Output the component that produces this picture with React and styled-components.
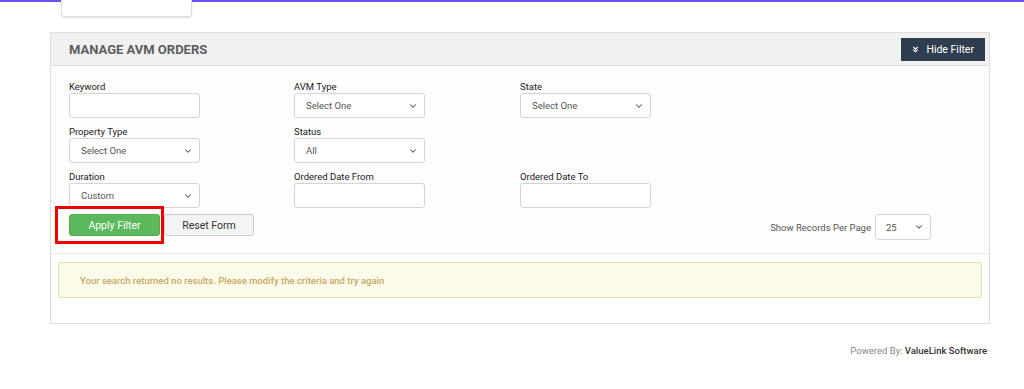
import React from 'react';
import styled, { createGlobalStyle } from 'styled-components';
import { ChevronDown, ChevronsDown } from 'lucide-react';

const GlobalStyle = createGlobalStyle`
    body{
        margin:0;
        background:#fff;
        font-family: Roboto, "Liberation Sans", Arial, sans-serif;
        color:#333;
    }
`
const TopStrip = styled.div`
    height:16px;
    border-top:2px solid #6c4ff0;
    display:flex;
`
const Tab = styled.div`
    margin-top:-2px;
    margin-left:61px;
    width:129px;
    height:16px;
    background:#fff;
    border:1px solid #ddd;
    border-top:none;
    border-radius:0 0 4px 4px;
    box-shadow:0 1px 2px rgba(0,0,0,0.12);
`
const Panel = styled.div`
    margin:14px 34px 0 50px;
    border:1px solid #dedede;
    background:#fff;
`
const PanelHead = styled.div`
    height:32px;
    background:#f1f1f1;
    border-bottom:1px solid #e0e0e0;
    display:flex;
    align-items:center;
    justify-content:space-between;
    padding:0 4px 0 18px;
    h2{
        margin:0;
        font-size:13px;
        font-weight:700;
        color:#5e5e5e;
    }
`
const DarkButton = styled.button`
    height:23px;
    padding:0 11px 0 10px;
    background:#2f3e4e;
    color:#fff;
    border:none;
    font-family:inherit;
    font-size:10.5px;
    font-weight:400;
    display:flex;
    align-items:center;
    gap:6px;
    cursor:pointer;
`
const FilterBody = styled.div`
    padding:14px 58px 13px 18px;
    border-bottom:1px solid #ececec;
    background:#fdfdfd;
`
const Grid = styled.div`
    display:grid;
    grid-template-columns:225px 226px 226px;
    row-gap:7px;
`
const Field = styled.div`
    display:flex;
    flex-direction:column;
    label{
        font-size:9.5px;
        font-weight:400;
        color:#1a1a1a;
        line-height:13px;
    }
`
const TextInput = styled.input`
    box-sizing:border-box;
    width:131px;
    height:25px;
    border:1px solid #d4d4d4;
    border-radius:3px;
    background:#fff;
    outline:none;
`
const SelectWrap = styled.div`
    position:relative;
    width:${p => p.$w || 131}px;
    height:${p => p.$h || 25}px;
    svg{
        position:absolute;
        right:7px;
        top:50%;
        transform:translateY(-50%);
        color:#555;
        pointer-events:none;
    }
`
const Select = styled.select`
    appearance:none;
    box-sizing:border-box;
    width:100%;
    height:100%;
    border:1px solid #d4d4d4;
    border-radius:3px;
    background:#fff;
    padding:0 0 0 ${p => p.$pad || 11}px;
    font-family:inherit;
    font-size:9.5px;
    color:#555;
    outline:none;
`
const ActionRow = styled.div`
    margin-top:6px;
    display:flex;
    align-items:flex-start;
    justify-content:space-between;
`
const Buttons = styled.div`
    position:relative;
    display:flex;
    gap:4px;
`
const Button = styled.button`
    box-sizing:border-box;
    height:22px;
    width:${p => p.$w}px;
    border-radius:3px;
    font-family:inherit;
    font-size:10.5px;
    font-weight:400;
    cursor:pointer;
    background:${p => p.$green ? '#5cb85c' : '#f4f4f4'};
    color:${p => p.$green ? '#fff' : '#333'};
    border:1px solid ${p => p.$green ? '#4cae4c' : '#ccc'};
`
const Highlight = styled.div`
    position:absolute;
    left:-14px;
    top:-8px;
    width:109px;
    height:38px;
    box-sizing:border-box;
    border:3px solid #f20000;
    pointer-events:none;
`
const PerPage = styled.div`
    display:flex;
    align-items:center;
    gap:4px;
    font-size:9.5px;
    color:#555;
`
const AlertArea = styled.div`
    padding:8px 7px 25px 7px;
`
const Alert = styled.div`
    height:36px;
    box-sizing:border-box;
    border:1px solid #e6dbb4;
    border-radius:3px;
    background:#fcfbea;
    color:#c6a868;
    font-size:9.5px;
    font-weight:500;
    display:flex;
    align-items:center;
    padding-left:21px;
`
const Footer = styled.div`
    margin:21px 37px 0 0;
    text-align:right;
    font-size:9.5px;
    color:#888;
    b{
        font-weight:500;
        color:#333;
    }
`

const SelectField = ({ value, w, h, pad }) => (
    <SelectWrap $w={w} $h={h}>
        <Select $pad={pad} defaultValue={value}>
            <option>{value}</option>
        </Select>
        <ChevronDown size={10} strokeWidth={2.5} />
    </SelectWrap>
)

const App = () => {
    return (
        <>
        <GlobalStyle />
        <TopStrip><Tab /></TopStrip>
        <Panel>
            <PanelHead>
                <h2>MANAGE AVM ORDERS</h2>
                <DarkButton><ChevronsDown size={9} strokeWidth={3} />Hide Filter</DarkButton>
            </PanelHead>
            <FilterBody>
                <Grid>
                    <Field><label>Keyword</label><TextInput /></Field>
                    <Field><label>AVM Type</label><SelectField value="Select One" /></Field>
                    <Field><label>State</label><SelectField value="Select One" /></Field>
                    <Field><label>Property Type</label><SelectField value="Select One" /></Field>
                    <Field><label>Status</label><SelectField value="All" /></Field>
                    <div />
                    <Field><label>Duration</label><SelectField value="Custom" /></Field>
                    <Field><label>Ordered Date From</label><TextInput /></Field>
                    <Field><label>Ordered Date To</label><TextInput /></Field>
                </Grid>
                <ActionRow>
                    <Buttons>
                        <Button $green $w={91}>Apply Filter</Button>
                        <Button $w={90}>Reset Form</Button>
                        <Highlight />
                    </Buttons>
                    <PerPage>
                        Show Records Per Page
                        <SelectField value="25" w={56} h={26} pad={10} />
                    </PerPage>
                </ActionRow>
            </FilterBody>
            <AlertArea>
                <Alert>Your search returned no results. Please modify the criteria and try again</Alert>
            </AlertArea>
        </Panel>
        <Footer>Powered By: <b>ValueLink Software</b></Footer>
        </>
    );
};

export default App;
